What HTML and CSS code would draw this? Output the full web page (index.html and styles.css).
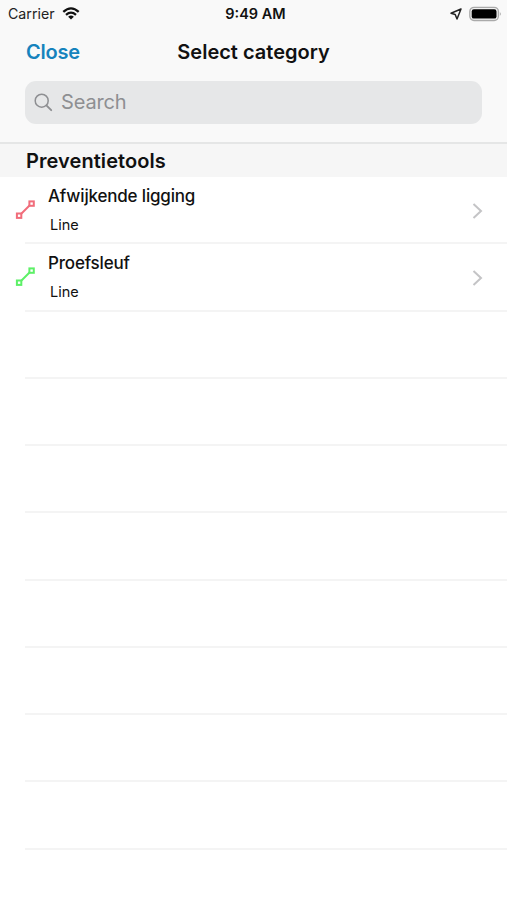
FILE: index.html
```html
<!DOCTYPE html>
<html lang="en">
<head>
<meta charset="utf-8">
<title>Select category</title>
<link rel="stylesheet" href="styles.css">
</head>
<body>
<header class="header">
  <div class="status">
    <div class="status-left">
      <span class="carrier">Carrier</span>
      <svg class="wifi" width="18" height="13" viewBox="0 0 18 13" fill="none" stroke="#111" stroke-width="2.3"><path d="M1.3 4.8Q9-2.1 16.7 4.8M4 7.8Q9 3.5 14 7.8"/><path d="M6.1 9.7Q9 7.5 11.9 9.7L9 12.6Z" fill="#111" stroke="none"/></svg>
    </div>
    <time class="time">9:49 AM</time>
    <div class="status-right">
      <svg width="12" height="12" viewBox="0 0 12 12" fill="none" stroke="#222" stroke-width="1.5" stroke-linejoin="round"><path d="M11 1L1 5.3L5.2 6.5L7 11Z"/></svg>
      <svg width="33" height="16" viewBox="0 0 33 16"><rect x=".8" y="1.3" width="28.6" height="13.2" rx="4.2" fill="#f1f1f1" stroke="#aaa" stroke-width="1.3"/><rect x="2.7" y="3.2" width="24.8" height="9.4" rx="2.2" fill="#000"/><path d="M30.9 5.8Q32.6 7.9 30.9 10Z" fill="#999"/></svg>
    </div>
  </div>
  <nav class="nav">
    <a class="close">Close</a>
    <h1 class="title">Select category</h1>
  </nav>
  <div class="search">
    <svg width="19" height="19" viewBox="0 0 19 19" fill="none" stroke="#8e8f92" stroke-width="1.5" stroke-linecap="round"><circle cx="7.7" cy="7.7" r="6.5"/><path d="M12.4 12.4L17.2 17.2" stroke-width="1.9"/></svg>
    <span class="placeholder">Search</span>
  </div>
</header>
<main>
  <h2 class="section">Preventietools</h2>
  <ul class="list">
    <li class="row">
      <svg class="line-icon red" width="20" height="20" viewBox="0 0 20 20"><path d="M5 15L15 5"/><rect x="1.9" y="13.5" width="4.4" height="4.4"/><rect x="14.4" y="1.4" width="4.4" height="4.4"/></svg>
      <div class="cell"><div class="label"><div class="name">Afwijkende ligging</div><div class="kind">Line</div></div>
      <svg class="chevron" width="11" height="16" viewBox="0 0 11 16"><path d="M1.5 1L9 8L1.5 15"/></svg></div>
    </li>
    <li class="row">
      <svg class="line-icon green" width="20" height="20" viewBox="0 0 20 20"><path d="M5 15L15 5"/><rect x="1.9" y="13.5" width="4.4" height="4.4"/><rect x="14.4" y="1.4" width="4.4" height="4.4"/></svg>
      <div class="cell"><div class="label"><div class="name">Proefsleuf</div><div class="kind">Line</div></div>
      <svg class="chevron" width="11" height="16" viewBox="0 0 11 16"><path d="M1.5 1L9 8L1.5 15"/></svg></div>
    </li>
    <li class="row"></li>
    <li class="row"></li>
    <li class="row"></li>
    <li class="row"></li>
    <li class="row"></li>
    <li class="row"></li>
    <li class="row"></li>
    <li class="row"></li>
  </ul>
</main>
</body>
</html>
```
FILE: styles.css
```css
* { box-sizing: border-box; }
body {
  margin: 0;
  height: 900px;
  overflow: hidden;
  background: #fff;
  color: #111;
  font-family: Inter, "Liberation Sans", sans-serif;
}
svg { display: block; flex: none; }
.header {
  height: 144px;
  background: #f9f9f9;
  border-bottom: 2px solid #e5e6e6;
}
.status {
  display: grid;
  grid-template-columns: 1fr auto 1fr;
  align-items: center;
  height: 27px;
  padding: 0 5px 0 8px;
}
.status-left, .status-right { display: flex; align-items: center; }
.status-left { gap: 7px; }
.status-right { justify-content: flex-end; gap: 7px; }
.carrier { font-size: 14.2px; line-height: 27px; color: #222; }
.time { margin-left: 1px; font-size: 14.5px; font-weight: 600; line-height: 27px; }
.nav {
  display: grid;
  grid-template-columns: 1fr auto 1fr;
  height: 54px;
  padding: 0 26px;
  line-height: 51px;
}
.close { color: #1683bd; font-size: 20px; font-weight: 600; letter-spacing: -0.2px; }
.title { margin: 0; font-size: 20px; font-weight: 600; }
.search {
  display: flex;
  align-items: center;
  gap: 8px;
  height: 43px;
  margin: 0 25px;
  padding-left: 9px;
  border-radius: 11px;
  background: #e6e7e8;
}
.placeholder { padding-bottom: 2px; font-size: 20px; letter-spacing: -0.15px; color: #8e8f92; }
.section {
  height: 33px;
  margin: 0;
  padding-left: 26px;
  background: #f6f6f6;
  font-size: 20px;
  font-weight: 600;
  line-height: 34px;
  letter-spacing: 0.07px;
}
.list { margin: 0; padding: 0; list-style: none; }
.row {
  display: flex;
  height: 67.25px;
  margin-left: 25px;
  border-bottom: 2px solid #f4f4f4;
}
.line-icon { margin: 23px 0 0 -10px; fill: #fff; stroke-width: 2; }
.red { stroke: #f16d7b; }
.green { stroke: #5df067; }
.cell { display: flex; flex: 1; padding: 8px 24px 0 13px; }
.label { flex: 1; }
.name { font-size: 17px; font-weight: 500; line-height: 22px; letter-spacing: -0.18px; }
.kind { padding: 6px 0 0 2px; font-size: 14.5px; line-height: 24px; }
.chevron { margin-top: 18px; fill: none; stroke: #c4c4c6; stroke-width: 2; }
```
